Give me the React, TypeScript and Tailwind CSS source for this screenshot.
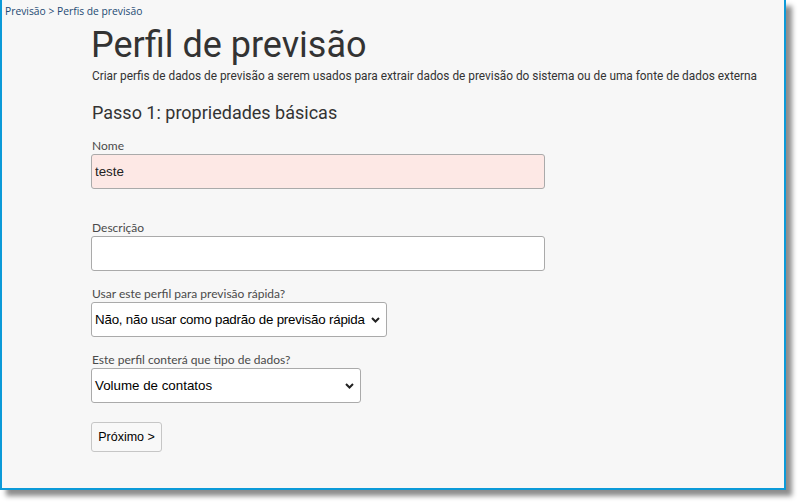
import React from 'react';

const Chevron = () => (
    <svg width="9" height="6" viewBox="0 0 9 6" className="shrink-0">
        <path d="M1 1 L4.5 4.5 L8 1" fill="none" stroke="#222" strokeWidth="2" />
    </svg>
);

const Label: React.FC<{ children: React.ReactNode }> = ({ children }) => (
    <div className="h-4 pl-px font-['Lato',sans-serif] text-[12px] leading-4 text-[#4a4a4a]">{children}</div>
);

const SelectBox: React.FC<{ text: string; width: string; tight?: boolean }> = ({ text, width, tight }) => (
    <div
        className={`flex h-[35px] ${width} items-center justify-between rounded-[3px] border border-[#aaa] bg-white pr-[6px] pl-[3px] font-['Liberation_Sans',Arial,sans-serif] text-[13.33px] text-black`}
    >
        <span className={tight ? 'whitespace-nowrap tracking-[-0.2px]' : 'whitespace-nowrap'}>{text}</span>
        <Chevron />
    </div>
);

export default function App() {
    return (
        <div className="h-[504px] w-[799px] overflow-hidden bg-white">
            <div className="h-[490px] w-[786px] border-r-2 border-b-2 border-l-2 border-[#0c9ad8] bg-[#f7f7f7] shadow-[6px_6px_5px_rgba(0,0,0,0.45)]">
                <div className="pt-[4px] pl-[3px] font-['Open_Sans',sans-serif] text-[10.3px] leading-[15px] text-[#1d4a73]">
                    Previsão &gt; Perfis de previsão
                </div>

                <div className="ml-[89px]">
                    <h1 className="mt-[8px] font-['Roboto',sans-serif] text-[36px] leading-[36px] font-normal text-[#333]">
                        Perfil de previsão
                    </h1>
                    <p className="mt-[6px] pl-px font-['Roboto',sans-serif] text-[11.85px] leading-[14px] text-[#333]">
                        Criar perfis de dados de previsão a serem usados para extrair dados de previsão do sistema ou de uma fonte de dados externa
                    </p>
                    <h2 className="mt-[19px] pl-px font-['Roboto',sans-serif] text-[18px] leading-[22px] text-[#333]">
                        Passo 1: propriedades básicas
                    </h2>

                    <div className="mt-[14px]">
                        <Label>Nome</Label>
                        <input
                            readOnly
                            value="teste"
                            className="block h-[35px] w-[454px] rounded-[3px] border border-[#aaa] bg-[#fde8e5] px-[3px] font-['Liberation_Sans',Arial,sans-serif] text-[13.33px] text-[#222] outline-none"
                        />
                    </div>

                    <div className="mt-[31px]">
                        <Label>Descrição</Label>
                        <input
                            readOnly
                            value=""
                            className="block h-[35px] w-[454px] rounded-[3px] border border-[#aaa] bg-white px-[3px] font-['Liberation_Sans',Arial,sans-serif] text-[13.33px] outline-none"
                        />
                    </div>

                    <div className="mt-[15px]">
                        <Label>Usar este perfil para previsão rápida?</Label>
                        <SelectBox text="Não, não usar como padrão de previsão rápida" width="w-[296px]" tight />
                    </div>

                    <div className="mt-[15px]">
                        <Label>Este perfil conterá que tipo de dados?</Label>
                        <SelectBox text="Volume de contatos" width="w-[270px]" />
                    </div>

                    <button className="mt-[19px] h-[30px] w-[71px] rounded-[3px] border border-[#c6c6c6] bg-[#f8f8f8] font-['Liberation_Sans',Arial,sans-serif] text-[12.5px] text-black">
                        Próximo &gt;
                    </button>
                </div>
            </div>
        </div>
    );
}
